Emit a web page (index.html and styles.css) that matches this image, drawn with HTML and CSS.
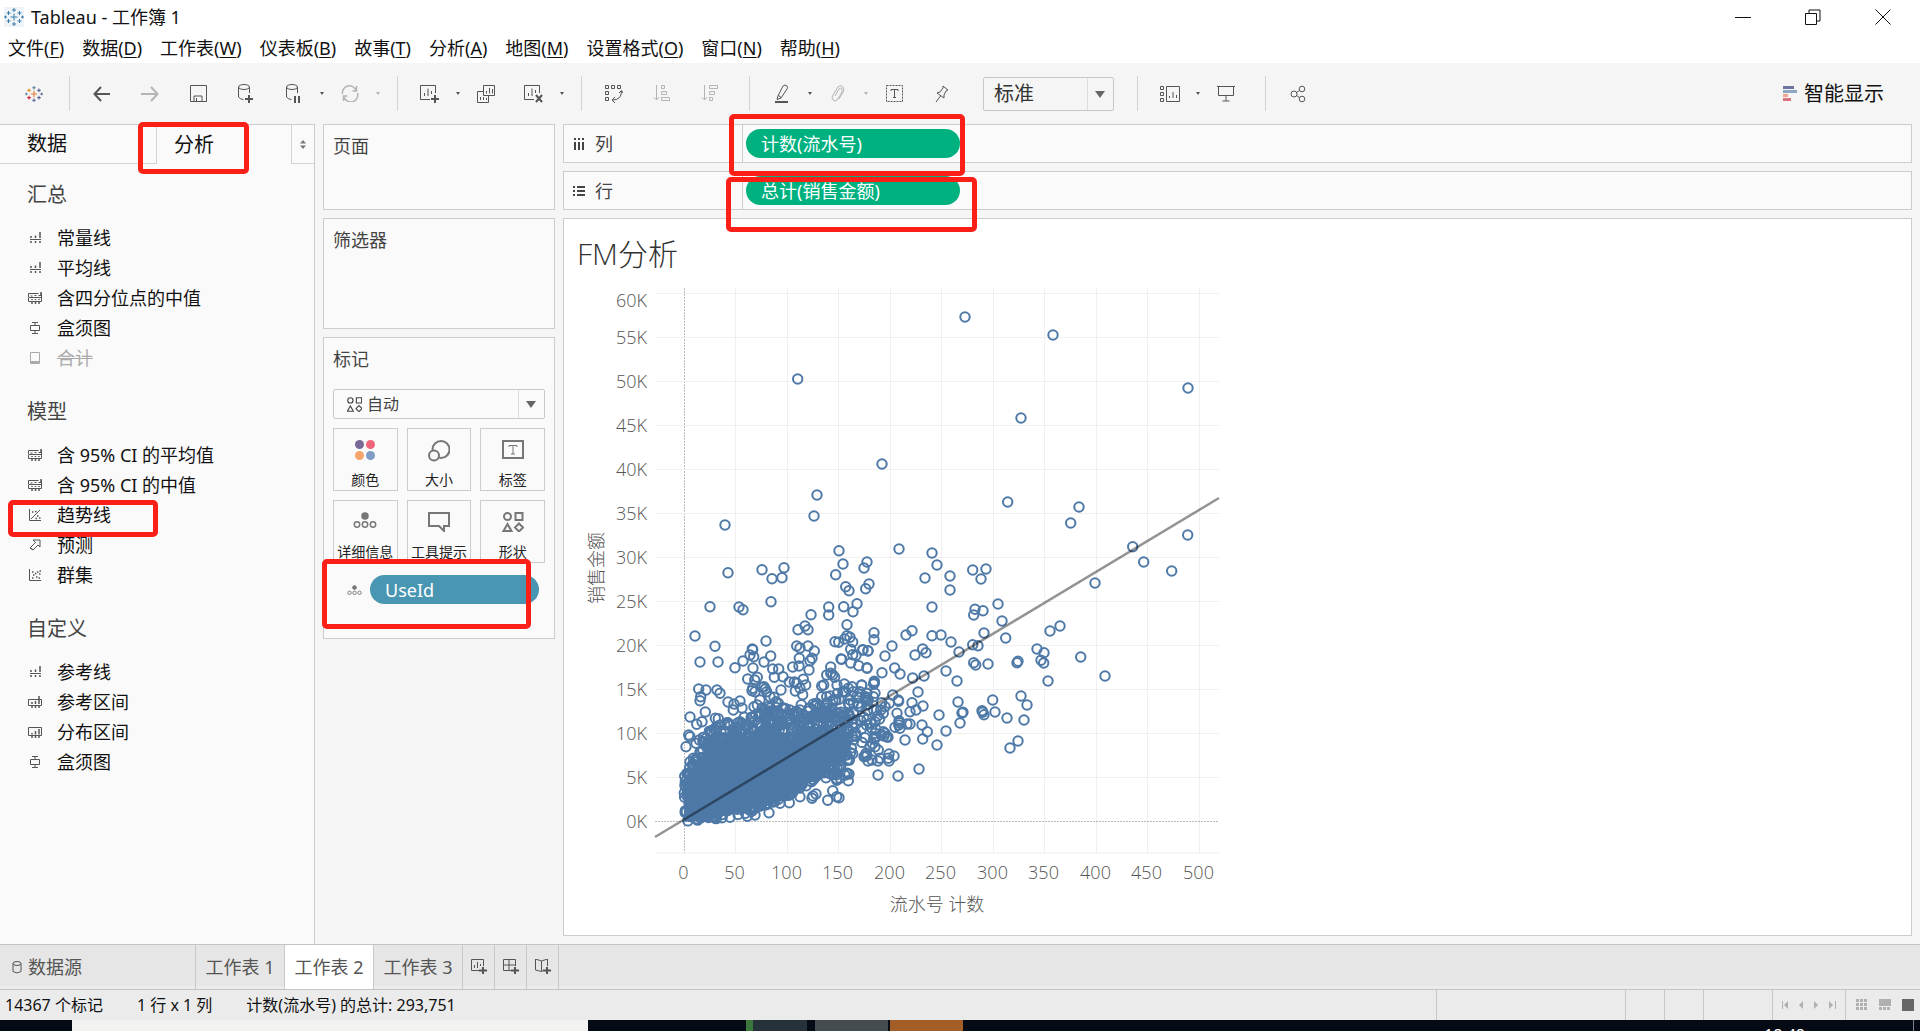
FILE: index.html
```html
<!DOCTYPE html>
<html lang="zh-CN">
<head>
<meta charset="utf-8">
<title>Tableau - 工作簿 1</title>
<link rel="stylesheet" href="styles.css">
</head>
<body>
<svg class="defs" aria-hidden="true">
  <symbol id="i-logo" viewBox="0 0 20 20"><path d="M10 6.500v7M6.500 10h7M10 1v4M8 3h4M10 15v4M8 17h4M4.500 4v4M2.500 6h4M15.500 4v4M13.500 6h4M4.500 12v4M2.500 14h4M15.500 12v4M13.500 14h4M1.500 8.500v3M0 10h3M18.500 8.500v3M17 10h3"/></symbol>
  <symbol id="i-line" viewBox="0 0 14 12"><path d="M2 7.500h11"/><path stroke-width="1.500" d="M3 6V4M7.500 6V3.500M12 6V0M3 9v2M7.500 9v2M12 9v2"/></symbol>
  <symbol id="i-band" viewBox="0 0 14 12"><path d="M.5 5V1.500h10M.5 5.500h13M.5 6v3.500h13V1M2.500 4h2M6.500 3.500h2M10.500 3.500h3"/><path stroke-width="1.500" d="M13 0v3M4 7v1M7.500 7v1M11 7v1M4 10v2M7.500 10v2M11 10v2"/></symbol>
  <symbol id="i-box" viewBox="0 0 14 12"><path d="M2.500 3.500h9v5h-9zM4 .5h6M7 .5v3M7 8.500v3M4 11.500h6"/></symbol>
  <symbol id="i-total" viewBox="0 0 14 12"><path d="M2.500.5h9v11h-9zM2.500 9.500h9M2.500 10.500h9"/></symbol>
  <symbol id="i-trend" viewBox="0 0 14 12"><path d="M1.500 0v11.500H13M3 10L12 1"/><path stroke-width="1.500" d="M4 3h1.500M7 2.500h1.500M9 7h1.500M7.500 9.500h1.500M11 9h1.500"/></symbol>
  <symbol id="i-fore" viewBox="0 0 14 12"><path d="M5 1h7v7l-2-2-5 5-3-2 5.500-5.500zM2 8l3 3" /></symbol>
  <symbol id="i-clus" viewBox="0 0 14 12"><path d="M1.500 0v11.500H13"/><path stroke-width="1.500" d="M4 3h1.500M5 6h1.500M7 4.500h1.500M4 9h1.500M8 8h1.500M9 3h1.500M11.500 2H13M11 5h1.500M10.500 9H12"/></symbol>
  <symbol id="i-range" viewBox="0 0 14 12"><path d="M.5 3.500h13v6H.5z"/><path stroke-width="1.500" d="M4 6v2M7.500 5v3M11 0v8M4 10v2M7.500 10v2M11 10v2"/></symbol>
  <symbol id="i-dist" viewBox="0 0 14 12"><path d="M.5 1.500h13v8H.5z"/><path stroke-width="1.500" d="M4 7v1.500M7.500 5v3.500M11 3v5.500M4 10v2M7.500 10v2M11 10v2"/></symbol>
  <symbol id="i-shapes" viewBox="0 0 20 20"><circle cx="4.500" cy="4.500" r="3.500"/><path d="M12.500 1h7v7h-7zM4.500 12l4 7h-8zM16 11.500l4 4-4 4-4-4z"/></symbol>
  <symbol id="i-detail" viewBox="0 0 24 16"><circle cx="12" cy="4" r="3" fill="currentColor"/><circle cx="4" cy="12.500" r="2.700"/><circle cx="12" cy="12.500" r="2.700"/><circle cx="20" cy="12.500" r="2.700"/></symbol>
</svg>

<header class="titlebar">
  <svg class="app-icon" width="20" height="20"><use href="#i-logo"/></svg>
  <h1>Tableau - 工作簿 1</h1>
  <div class="window-buttons">
    <button aria-label="最小化"><svg width="16" height="16"><path d="M0 8.500h16"/></svg></button>
    <button aria-label="还原"><svg width="16" height="16"><path d="M.5 4.500h11v11H.5zM4 4V1h11v11h-3.500"/></svg></button>
    <button aria-label="关闭"><svg width="16" height="16"><path d="M.5.5l15 15M15.500.5l-15 15"/></svg></button>
  </div>
</header>

<nav class="menubar">
  <button>文件(<u>F</u>)</button><button>数据(<u>D</u>)</button><button>工作表(<u>W</u>)</button><button>仪表板(<u>B</u>)</button><button>故事(<u>T</u>)</button><button>分析(<u>A</u>)</button><button>地图(<u>M</u>)</button><button>设置格式(<u>O</u>)</button><button>窗口(<u>N</u>)</button><button>帮助(<u>H</u>)</button>
</nav>

<div class="toolbar">
  <button class="tool start" aria-label="开始页面"><svg class="logo-color" width="18" height="18" viewBox="0 0 20 20"><path stroke="#e8762c" d="M10 6.500v7M6.500 10h7"/><path stroke="#5b6591" d="M10 15v4M8 17h4M15.500 12v4M13.500 14h4M18.500 8.500v3M17 10h3M15.500 4v4M13.500 6h4"/><path stroke="#eb9129" d="M4.500 4v4M2.500 6h4"/><path stroke="#c72035" d="M4.500 12v4M2.500 14h4"/><path stroke="#59879b" d="M10 1v4M8 3h4M1.500 8.500v3M0 10h3"/></svg></button>
  <span class="sep"></span>
  <button class="tool" aria-label="撤消"><svg width="18" height="16"><path stroke-width="2" d="M17 8H2M8 1L1.500 8 8 15"/></svg></button>
  <button class="tool off" aria-label="重做"><svg width="18" height="16"><path stroke-width="2" d="M0 8h15M10 1l6.500 7-6.500 7"/></svg></button>
  <button class="tool" aria-label="保存"><svg width="17" height="17"><path d="M.5.5h16v16H.5zM4 16v-5h8v5M6.500 13v3"/></svg></button>
  <button class="tool" aria-label="新建数据源"><svg width="16" height="19"><ellipse cx="6" cy="3" rx="5.500" ry="2.500"/><path d="M.5 3v10q2 2.500 5 2.500M11.500 3v6"/><path stroke-width="2" d="M11 11v8M7 15h8"/></svg></button>
  <button class="tool" aria-label="暂停自动更新"><svg width="16" height="19"><ellipse cx="6" cy="3" rx="5.500" ry="2.500"/><path d="M.5 3v10q2 2.500 5 2.500M11.500 3v6"/><path stroke-width="2" d="M9 12v7M13 12v7"/></svg></button>
  <span class="caret"></span>
  <button class="tool off" aria-label="运行更新"><svg width="18" height="17"><path stroke-width="1.500" d="M1.500 9A7 7 0 0 1 15 5.500M16.500 8A7 7 0 0 1 3 12M15.500 1v5h-4M2.500 16v-5h4"/></svg></button>
  <span class="caret off"></span>
  <span class="sep"></span>
  <button class="tool" aria-label="新建工作表"><svg width="20" height="18"><path d="M15.500 8V.5H.5v14H10M4.500 11V8M8 11V3.500M11.500 9V6"/><path stroke-width="2" d="M15 10v8M11 14h8"/></svg></button>
  <span class="caret"></span>
  <button class="tool" aria-label="复制"><svg width="18" height="18"><path d="M6.500.5h11v10h-11zM6 6.500H.5v11h11V11M9.500 8.500V6M12.500 8.500V3M15.500 8.500V4M3.500 15v-3M6.500 15v-3M9.500 15v-2"/></svg></button>
  <button class="tool" aria-label="清除工作表"><svg width="20" height="18"><path d="M15.500 8V.5H.5v14H10M4.500 11V8M8 11V3.500M11.500 8V5"/><path stroke-width="2" d="M12 10l6 7M18 10l-6 7"/></svg></button>
  <span class="caret"></span>
  <span class="sep"></span>
  <button class="tool" aria-label="交换行和列"><svg width="18" height="18"><path d="M.5.500h3v3h-3zM6.500.500h3v3h-3zM12.500.500h3v3h-3zM.5 6.500h3v3h-3zM.5 12.500h3v3h-3zM16.500 6q0 9-9 9M14 8l2.500-2.500L18 8M10 12l-3 3 3 3"/></svg></button>
  <button class="tool off" aria-label="升序排序"><svg width="18" height="17"><path d="M3.500 0v15M.5 12l3 3 3-3M8.500.500h3v3h-3zM8.500 6.500h5v3h-5zM8.500 12.500h8v3h-8z"/></svg></button>
  <button class="tool off" aria-label="降序排序"><svg width="18" height="17"><path d="M3.500 0v15M.5 12l3 3 3-3M8.500.500h8v3h-8zM8.500 6.500h5v3h-5zM8.500 12.500h3v3h-3z"/></svg></button>
  <span class="sep"></span>
  <button class="tool" aria-label="突出显示"><svg width="14" height="19"><path d="M3 12l5-10q2-2 4 0 1 1 0 3L6 14l-4 1.500zM3 11l3 2.500"/><path stroke-width="2" d="M0 18h13"/></svg></button>
  <span class="caret"></span>
  <button class="tool off" aria-label="分组"><svg width="14" height="18"><path d="M4 11l4-7q2-2 3 0t-1 5l-4 6q-2 2-4 0t0-5l5-8q3-3 5 0t0 5l-4 7"/></svg></button>
  <span class="caret off"></span>
  <button class="tool" aria-label="显示标记标签"><svg width="17" height="17"><path stroke-dasharray="2 1" d="M.5.5h16v16H.5z"/><path d="M5 6V4.500h7V6M8.500 4.500v8M7 12.500h3"/></svg></button>
  <button class="tool" aria-label="固定轴"><svg width="14" height="18"><path d="M8 1l5 4-2 1-2 4v3L2 8l3-1 3-4zM5.500 11L1 17"/></svg></button>
  <span class="fit"><select aria-label="适合"><option>标准</option></select></span>
  <span class="sep"></span>
  <button class="tool" aria-label="显示卡"><svg width="20" height="16"><path d="M.5.5h3v3h-3zM.5 6.500h3v3h-3zM.5 12.500h3v3h-3zM6.500.5h13v15h-13zM9.500 12v-2M13 12V6M16.500 12V9"/></svg></button>
  <span class="caret"></span>
  <button class="tool" aria-label="演示模式"><svg width="18" height="17"><path d="M0 1.500h18M1.500 1.500v9h15v-9M9 10.500V16M5.500 16h7"/></svg></button>
  <span class="sep"></span>
  <button class="tool" aria-label="共享"><svg width="16" height="18"><circle cx="4" cy="9" r="3"/><circle cx="12" cy="4" r="2.800"/><circle cx="12" cy="14" r="2.800"/><path d="M6.500 7.500l3-2M6.500 10.500l3 2"/></svg></button>
  <button class="showme"><svg width="14" height="16"><path stroke="#6e74a0" stroke-width="3" d="M0 1.500h11"/><path stroke="#8aa6c1" stroke-width="3" d="M0 5.500h14"/><path stroke="#f0a58c" stroke-width="3" d="M0 9.500h5"/><path stroke="#d9747f" stroke-width="3" d="M0 13.500h8"/></svg>智能显示</button>
</div>

<main class="workspace">
  <aside class="analytics">
    <div class="side-tabs">
      <button class="side-tab idle">数据</button>
      <button class="side-tab current">分析<span class="mark mark-tab"></span></button>
      <button class="side-toggle" aria-label="折叠"><svg width="6" height="9"><path d="M3 0l3 3.500H0zM3 9l3-3.500H0z"/></svg></button>
    </div>
    <section><h2>汇总</h2>
      <button class="item"><svg><use href="#i-line"/></svg>常量线</button>
      <button class="item"><svg><use href="#i-line"/></svg>平均线</button>
      <button class="item"><svg><use href="#i-band"/></svg>含四分位点的中值</button>
      <button class="item"><svg><use href="#i-box"/></svg>盒须图</button>
      <button class="item unavailable" disabled><svg><use href="#i-total"/></svg><s>合计</s></button>
    </section>
    <section><h2>模型</h2>
      <button class="item"><svg><use href="#i-band"/></svg>含 95% CI 的平均值</button>
      <button class="item"><svg><use href="#i-band"/></svg>含 95% CI 的中值</button>
      <button class="item"><svg><use href="#i-trend"/></svg>趋势线<span class="mark mark-trend"></span></button>
      <button class="item"><svg><use href="#i-fore"/></svg>预测</button>
      <button class="item"><svg><use href="#i-clus"/></svg>群集</button>
    </section>
    <section><h2>自定义</h2>
      <button class="item"><svg><use href="#i-line"/></svg>参考线</button>
      <button class="item"><svg><use href="#i-range"/></svg>参考区间</button>
      <button class="item"><svg><use href="#i-dist"/></svg>分布区间</button>
      <button class="item"><svg><use href="#i-box"/></svg>盒须图</button>
    </section>
  </aside>

  <div class="cards">
    <section class="card pages"><h2>页面</h2></section>
    <section class="card filters"><h2>筛选器</h2></section>
    <section class="card marks"><h2>标记</h2>
      <div class="mark-type"><svg width="15" height="15"><use href="#i-shapes"/></svg><select aria-label="标记类型"><option>自动</option></select></div>
      <div class="mark-grid">
        <button><svg class="colors" width="20" height="20"><circle cx="4.500" cy="4.500" r="4.500" fill="#7a6896"/><circle cx="15.500" cy="4.500" r="4.500" fill="#f0647c"/><circle cx="4.500" cy="15.500" r="4.500" fill="#f5a56b"/><circle cx="15.500" cy="15.500" r="4.500" fill="#7e9cc6"/></svg>颜色</button>
        <button><svg width="22" height="22"><circle cx="13" cy="9.500" r="8.500"/><circle cx="6" cy="15.500" r="5" fill="#fafafa"/></svg>大小</button>
        <button><svg width="22" height="20"><path d="M1 1h20v17H1z"/><path stroke-width="1" d="M7 7V5.500h8V7M11 5.500v8.500M9 14h4"/></svg>标签</button>
        <button><svg class="fine" width="24" height="16"><use href="#i-detail"/></svg>详细信息</button>
        <button><svg width="22" height="20"><path d="M1 1h20v13h-5v5l-5-5H1z"/></svg>工具提示</button>
        <button><svg width="22" height="20"><use href="#i-shapes"/></svg>形状</button>
      </div>
      <div class="encoding">
        <svg class="fine" width="15" height="10"><use href="#i-detail"/></svg>
        <button class="pill dimension">UseId</button>
        <span class="mark mark-detail"></span>
      </div>
    </section>
  </div>

  <div class="view">
    <div class="shelf">
      <div class="shelf-name"><svg width="12" height="12"><path stroke-width="2" d="M2 0v2M6 0v2M10 0v2M2 4v8M6 4v8M10 4v8"/></svg>列</div>
      <button class="pill measure">计数(流水号)<span class="mark mark-columns"></span></button>
    </div>
    <div class="shelf">
      <div class="shelf-name"><svg width="12" height="12"><path stroke-width="2" d="M0 2h2M0 6h2M0 10h2M4 2h8M4 6h8M4 10h8"/></svg>行</div>
      <button class="pill measure">总计(销售金额)<span class="mark mark-rows"></span></button>
    </div>
    <section class="sheet">
      <h2>FM分析</h2>
      <svg id="chart" class="chart" width="660" height="640" viewBox="576 280 660 640" role="img" aria-label="销售金额与流水号计数散点图"></svg>
    </section>
  </div>
</main>

<nav class="sheet-tabs">
  <button class="source"><svg width="10" height="13"><ellipse cx="5" cy="2.500" rx="4" ry="2"/><path d="M1 2.500v8q4 3 8 0v-8"/></svg>数据源</button>
  <button class="sheet-tab">工作表 1</button>
  <button class="sheet-tab active">工作表 2</button>
  <button class="sheet-tab">工作表 3</button>
  <button class="new" aria-label="新建工作表"><svg width="16" height="16"><path d="M12.500 7V.5H.5v11H8M3.500 9V6M6.500 9V3M9.500 7V5"/><path stroke-width="2" d="M12 8v7M8 11.500h8"/></svg></button>
  <button class="new" aria-label="新建仪表板"><svg width="16" height="16"><path d="M12.500 7V.5H.5v11H8M.5 6h12M6 .5v11"/><path stroke-width="2" d="M12 8v7M8 11.500h8"/></svg></button>
  <button class="new" aria-label="新建故事"><svg width="16" height="16"><path d="M6.500 2v10M6.500 2L.5 0v11l6 1.500 2-1M6.500 2l6-2v7"/><path stroke-width="2" d="M12 8v7M8 11.500h8"/></svg></button>
</nav>

<footer class="status">
  <span>14367 个标记</span><span>1 行 x 1 列</span><span>计数(流水号) 的总计: 293,751</span>
  <div class="status-cells">
    <i class="cell wide"></i><i class="cell small"></i><i class="cell small"></i><i class="cell medium"></i>
    <div class="cell pager">
      <button aria-label="第一页"><svg width="7" height="8"><path d="M0 0h1v8H0zM6 0v8L2 4z"/></svg></button>
      <button aria-label="上一页"><svg width="7" height="8"><path d="M5 0v8L1 4z"/></svg></button>
      <button aria-label="下一页"><svg width="7" height="8"><path d="M1 0v8l4-4z"/></svg></button>
      <button aria-label="最后一页"><svg width="7" height="8"><path d="M0 0v8l4-4zM6 0h1v8H6z"/></svg></button>
    </div>
    <div class="cell modes">
      <button aria-label="缩略图"><svg width="12" height="12"><path d="M0 0h3v3H0zM4 0h3v3H4zM8 0h3v3H8zM0 4h3v3H0zM4 4h3v3H4zM8 4h3v3H8zM0 8h3v3H0zM4 8h3v3H4zM8 8h3v3H8z"/></svg></button>
      <button aria-label="胶片"><svg width="12" height="12"><path d="M0 0h12v7H0zM0 8h3v3H0zM4 8h3v3H4zM8 8h3v3H8z"/></svg></button>
      <button aria-label="工作表视图" class="on"><svg width="12" height="12"><path d="M0 0h12v12H0z"/></svg></button>
    </div>
  </div>
</footer>

<div class="taskbar">
  <i class="tb-start"></i><i class="tb-search"></i><i class="tb-gap"></i><i class="tb-green"></i><i class="tb-slate"></i><i class="tb-grey"></i><i class="tb-orange"></i>
  <span class="clock">18:48</span>
  <i class="tb-desktop"></i>
</div>
<script src="chart.js"></script>
</body>
</html>
```
FILE: styles.css
```css
* { box-sizing: border-box; }
body {
  margin: 0;
  min-height: 100vh;
  display: flex;
  flex-direction: column;
  background: #f5f5f5;
  color: #111;
  font: 18px/24px "Noto Sans", "Noto Sans CJK SC", sans-serif;
}
button, select {
  font: inherit;
  color: inherit;
  background: none;
  border: 0;
  padding: 0;
  margin: 0;
  text-align: left;
}
h1, h2 { margin: 0; font-size: inherit; font-weight: 400; }
svg { flex: none; fill: none; stroke: currentColor; }
.defs { position: absolute; width: 0; height: 0; }

.titlebar { display: flex; align-items: center; height: 34px; padding-left: 4px; background: #fff; }
.app-icon { margin-right: 7px; color: #3f7da8; background: #eef4f8; }
.window-buttons { display: flex; margin-left: auto; padding-right: 2px; }
.window-buttons button { width: 70px; height: 34px; display: grid; place-items: center; }

.menubar { display: flex; gap: 18px; height: 29px; padding: 2px 8px 3px; background: #fff; }
.menubar u { text-underline-offset: 2px; text-decoration-thickness: 1px; }

.toolbar { display: flex; align-items: center; height: 61px; padding-left: 14px; color: #555; }
.tool { display: grid; place-items: center; width: 48px; height: 40px; }
.tool.start { width: 40px; }
.off { color: #b4b4b4; }
.sep { width: 1px; height: 35px; margin: 0 8px 0 15px; background: #d4d4d4; }
.caret { width: 8px; display: grid; place-items: center; }
.caret::after { content: ""; border: 2px solid transparent; border-top: 3px solid; border-bottom: 0; }
.logo-color { stroke-width: 1.2; }
.fit { position: relative; width: 131px; height: 34px; margin: 0 8px 0 17px; border: 1px solid #c8c8c8; border-radius: 2px; }
.fit select { width: 100%; height: 32px; padding-left: 10px; font-size: 20px; line-height: 32px; color: #333; }
select { appearance: none; outline: 0; }
.fit::before, .mark-type::before { content: ""; position: absolute; right: 25px; top: 0; bottom: 0; border-left: 1px solid #ddd; }
.fit::after, .mark-type::after { content: ""; position: absolute; right: 8px; top: 50%; margin-top: -3px; border: 5px solid transparent; border-top: 7px solid #666; border-bottom: 0; }
.showme { display: flex; align-items: center; gap: 7px; margin: 0 36px 0 auto; font-size: 20px; color: #111; }

.workspace { flex: 1; display: flex; }
.analytics { width: 315px; background: #fafafa; border: solid #ccc; border-width: 1px 1px 0 0; }
.side-tabs { display: flex; height: 39px; margin-bottom: 3px; font-size: 20px; }
.side-tab.idle { width: 157px; padding-left: 27px; border: solid #d4d4d4; border-width: 0 1px 1px 0; }
.side-tab.current { position: relative; flex: 1; padding-left: 17px; }
.side-toggle { width: 23px; display: grid; place-items: center; border: solid #d4d4d4; border-width: 0 0 1px 1px; }
.side-toggle svg { fill: #777; stroke: none; }
.analytics section { margin-bottom: 11px; }
.analytics h2 { height: 56px; padding-left: 27px; font-size: 20px; line-height: 56px; color: #444; }
.item { position: relative; display: flex; align-items: center; gap: 15px; width: 100%; height: 30px; padding-left: 28px; }
.item svg { width: 14px; height: 12px; color: #555; }
.item.unavailable, .item.unavailable svg { color: #aaa; }

.cards { display: flex; flex-direction: column; gap: 8px; width: 248px; padding-left: 8px; padding-right: 8px; }
.card { background: #fafafa; border: 1px solid #ccc; padding: 9px 9px 0; color: #444; }
.pages { height: 86px; }
.filters { height: 111px; }
.marks { padding-bottom: 34px; }
.card h2 { margin-bottom: 18px; }
.mark-type { position: relative; display: flex; align-items: center; gap: 5px; height: 30px; padding-left: 13px; border: 1px solid #c8c8c8; border-radius: 2px; font-size: 16px; }
.mark-type svg { stroke-width: 1.5; }
.mark-type select { flex: 1; }
.mark-grid { display: grid; grid-template-columns: repeat(3, 1fr); gap: 9px; margin-top: 9px; }
.mark-grid button { display: flex; flex-direction: column; align-items: center; justify-content: space-between; height: 63px; padding-top: 11px; border: 1px solid #ccc; font-size: 14px; line-height: 20px; color: #222; text-align: center; white-space: nowrap; }
.mark-grid svg { color: #777; stroke-width: 2; }
.mark-grid .colors { stroke: none; }
.encoding { position: relative; display: flex; align-items: center; gap: 8px; margin-top: 12px; padding-left: 14px; }
.encoding svg { color: #777; }
.marks .fine { stroke-width: 1.5; }
.pill { position: relative; height: 29px; padding-left: 15px; border-radius: 15px; line-height: 28px; color: #fff; }
.dimension { width: 169px; background: #4996b2; }
.measure { width: 214px; background: #00b180; }

.view { flex: 1; min-width: 0; display: flex; flex-direction: column; gap: 8px; padding: 0 8px 8px 0; }
.shelf { display: flex; align-items: center; height: 39px; background: #fafafa; border: 1px solid #ccc; }
.shelf-name { display: flex; align-items: center; gap: 10px; width: 179px; height: 37px; margin-right: 3px; padding-left: 9px; border-right: 1px solid #ccc; color: #444; }
.sheet { flex: 1; padding: 17px 12px 12px; background: #fff; border: 1px solid #ccc; }
.sheet h2 { margin-bottom: 8px; padding-left: 1px; font: 300 30px/36px "Open Sans", "Noto Sans CJK SC", sans-serif; color: #333; }
.chart { display: block; font: 300 18px "Open Sans", "Noto Sans CJK SC", sans-serif; }
.chart text { fill: #555; stroke: none; text-anchor: middle; }
.chart .y-label { text-anchor: end; }
.grid-line { stroke: #f0f0f0; }
.zero-line { stroke: #bbb; stroke-dasharray: 2 1; }
.point { fill: none; stroke: #4e79a7; stroke-width: 2; }
.cluster { fill: #4e79a7; stroke: none; }
.trend-line { stroke: #000; stroke-opacity: .42; stroke-width: 2.500; }

/* Red highlight frames drawn over the controls they point at */
.mark { position: absolute; z-index: 2; border: 5px solid #fb2017; border-radius: 5px; pointer-events: none; }
.mark-tab { left: -19px; top: -3px; width: 111px; height: 52px; }
.mark-trend { left: 8px; top: 0; width: 150px; height: 37px; }
.mark-detail { left: -11px; top: -16px; width: 209px; height: 70px; }
.mark-columns { left: -17px; top: -15px; width: 236px; height: 62px; }
.mark-rows { left: -20px; top: 1px; width: 251px; height: 55px; }

.sheet-tabs { display: flex; height: 46px; background: #e6e6e6; border: solid #c4c4c4; border-width: 1px 0; box-shadow: inset 0 -3px #ececec; color: #555; }
.sheet-tabs button { border-right: 1px solid #c8c8c8; }
.source { display: flex; align-items: center; gap: 6px; width: 196px; padding-left: 12px; }
.sheet-tabs .sheet-tab { width: 89px; text-align: center; }
.sheet-tabs .active { background: #fff; }
.new { display: grid; place-items: center; width: 32px; }

.status { display: flex; align-items: center; gap: 34px; height: 30px; padding-left: 5px; background: #ebebeb; font-size: 16px; }
.status-cells { display: flex; height: 30px; margin-left: auto; }
.cell { display: flex; align-items: center; border-left: 1px solid #c8c8c8; }
.wide { width: 189px; }
.small { width: 39px; }
.medium { width: 69px; }
.pager { width: 73px; justify-content: space-around; padding: 0 5px; }
.modes { width: 75px; gap: 11px; padding-left: 10px; }
.cell button { display: flex; }
.cell svg { fill: #b0b0b0; stroke: none; }
.cell .on svg { fill: #666; }

.taskbar { display: flex; height: 11px; overflow: hidden; background: #040b14; }
.tb-start { width: 72px; }
.tb-search { width: 516px; background: #f2f2f0; }
.tb-gap { width: 158px; }
.tb-green { width: 7px; background: #38763c; }
.tb-slate { width: 54px; background: #26323a; }
.tb-grey { width: 73px; margin-left: 8px; background: #454c50; }
.tb-orange { width: 73px; margin-left: 2px; background: #a35d27; }
.clock { margin: 3px 108px 0 auto; font-size: 16px; color: #fff; }
.tb-desktop { width: 7px; border-left: 1px solid #7d8288; }
```
FILE: chart.js
```javascript
const svg = document.getElementById('chart');

function add(name, attrs, text) {
  const el = document.createElementNS('http://www.w3.org/2000/svg', name);
  for (const key in attrs) el.setAttribute(key, attrs[key]);
  if (text) el.textContent = text;
  svg.appendChild(el);
  return el;
}

const LEFT = 655, RIGHT = 1219, TOP = 288, BOTTOM = 853;
const xOf = count => 684.5 + count * 1.029;
const yOf = thousands => 821.5 - thousands * 8.8;

// Grid and axis labels
for (let count = 0; count <= 500; count += 50) {
  const x = Math.floor(xOf(count)) + 0.5;
  add('line', { x1: x, x2: x, y1: TOP, y2: BOTTOM, class: count ? 'grid-line' : 'zero-line' });
  add('text', { x: x - 1, y: 879 }, String(count));
}
for (let k = 0; k <= 60; k += 5) {
  const y = Math.floor(yOf(k)) + 0.5;
  add('line', { x1: LEFT, x2: RIGHT, y1: y, y2: y, class: k ? 'grid-line' : 'zero-line' });
  add('text', { x: 647, y: k === 60 ? 307 : y + 6, class: 'y-label' }, k + 'K');
}
add('line', { x1: LEFT, x2: RIGHT, y1: BOTTOM, y2: BOTTOM, class: 'grid-line' });
add('text', { x: 937, y: 911 }, '流水号 计数');
add('text', { transform: 'translate(603 568) rotate(-90)' }, '销售金额');

// Customers, in thirds of a pixel from the origin of each list
const low = [975,-669,1239,-615,473,-483,1644,-456,1143,-366,726,-228,531,-135,522,-72,255,-45,
264,98,366,89,432,83,396,116,426,113,597,32,609,72,587,104,681,66,672,84,687,132,677,146,617,140,627,152,
210,200,297,201,309,209,393,185,513,224,566,201,566,225,611,200,651,191,639,215,165,288,225,319,180,366,234,366,
378,303,474,269,495,258,504,269,621,254,621,287,630,292,638,306,614,297,585,305,596,307,702,278,702,299,
470,318,504,318,480,324,523,333,337,327,338,329,330,345,341,350,309,363,392,348,372,366,285,383,339,384,
632,328,648,346,638,344,668,329,684,332,603,357,605,358,632,369,656,377,681,383,572,381,458,381,477,378,507,390,
510,362,516,355,478,355,398,387,416,387,403,412,429,410,323,417,344,420,352,412,448,426,463,426,490,418,560,405,
578,404,572,400,584,412,497,435,545,438,551,435,591,435,613,432,665,435,701,432,703,428,636,440,176,447,198,450,
231,450,240,460,182,470,180,482,423,450,338,445,345,455,366,442,376,447,380,455,372,440,336,452,466,453,480,445,
488,464,470,430,264,486,282,492,300,483,280,510,306,504,196,516,150,531,170,553,186,545,146,585,150,590,138,620,226,535,
235,536,262,548,300,545,306,550,342,500,352,495,366,505,402,472,408,485,415,490,428,503,385,500,360,480,390,470,484,494,
480,510,460,520,472,518,545,470,560,470,570,468,597,478,530,490,520,492,540,498,560,488,588,520,568,520,680,460,700,470,
685,480,660,455,640,490,655,490,625,445,640,455,650,470,630,480,387,818,448,788,420,790,480,770,516,775,528,762,519,768,
563,781,597,773,590,770,578,752,625,722,600,715,622,700,345,825,270,832,322,829,160,655,150,665,178,600,168,610];
const high = [443,66,657,81,632,129,818,200,983,165,851,246,935,273,705,309,117,207,216,219,231,255,338,270,378,267,363,297,
195,294,270,288,270,330,216,381,345,388,341,405,369,392,414,372,426,423,437,474,372,459,156,452,138,465,216,467,243,465,
273,486,96,498,188,507,198,518,165,525,75,528,338,494,354,497,297,516,192,588,158,594,258,573,291,603,341,548,347,555,
384,552,471,548,474,544,531,507,552,518,543,541,551,549,570,453,600,438,662,531,735,588,564,603,66,578,104,564,120,582,
174,636,98,645,116,664,156,668,189,678,168,690,150,695,111,700,237,705,294,666,309,697,306,699,300,729,258,753,366,692,
368,697,372,704,398,660,405,696,441,714,492,720,483,648,501,675,474,783,450,804,186,735,202,755,188,777,150,732,141,732,
116,735,117,722,105,742,120,745,135,780,231,795,177,867,54,885,114,888,102,828,87,822,87,843,54,843,24,843,60,835,85,835,
45,800,80,770,72,768,64,765,75,760,45,760,35,745,45,725,62,690,70,700,50,690,45,640,42,610,43,604,20,640,20,655,24,513,
9,510,21,565,5,616,36,840,12,830,55,810,30,800,84,772,70,755,118,728,115,660,88,670,75,680,65,668];

// Repeatable random numbers keep the dense area the same on every load
let seed = 20190;
function random() {
  seed = (seed * 1103515245 + 12345) % 2147483648;
  return seed / 2147483648;
}
function inside(x, y, poly) {
  let hit = false;
  for (let i = 0, j = poly.length - 1; i < poly.length; j = i++) {
    const [xi, yi] = poly[i], [xj, yj] = poly[j];
    if ((yi > y) !== (yj > y) && x < (xj - xi) * (y - yi) / (yj - yi) + xi) hit = !hit;
  }
  return hit;
}
function ring(x, y) {
  add('circle', { cx: x.toFixed(1), cy: y.toFixed(1), r: 4.7, class: 'point' });
}
function plot(list, ox, oy) {
  for (let i = 0; i < list.length; i += 2) ring(ox + list[i] / 3, oy + list[i + 1] / 3);
}
function scatter(poly, amount) {
  while (amount > 0) {
    const x = 120 + random() * 640, y = 430 + random() * 430;
    if (!inside(x, y, poly)) continue;
    ring(640 + x / 3, 540 + y / 3);
    amount--;
  }
}

const core = [[132,715],[160,680],[200,640],[270,600],[340,610],[380,590],[440,620],[500,610],[560,590],[600,610],
  [590,640],[560,670],[520,695],[480,725],[430,765],[340,808],[240,830],[150,845],[132,845]];
const edge = [[132,710],[150,670],[200,610],[260,590],[340,590],[380,560],[440,600],[520,580],[600,570],[620,600],
  [610,660],[550,700],[490,745],[430,775],[340,815],[240,835],[150,845],[132,845]];
const halo = [[150,620],[190,570],[260,545],[380,515],[520,525],[570,510],[640,520],[650,590],[640,660],
  [600,690],[540,710],[440,680],[300,620]];
const fringe = [[230,545],[380,500],[520,500],[620,440],[690,455],[725,520],[735,580],[690,650],[620,710],[560,735],[540,560]];

add('polygon', { class: 'cluster', points: core.map(([x, y]) => (640 + x / 3) + ',' + (540 + y / 3)).join(' ') });
scatter(edge, 900);
scatter(halo, 300);
scatter(fringe, 130);
plot(low, 640, 540);
plot(high, 860, 480);

add('line', { x1: LEFT, y1: 837, x2: RIGHT, y2: 498, class: 'trend-line' });
```
